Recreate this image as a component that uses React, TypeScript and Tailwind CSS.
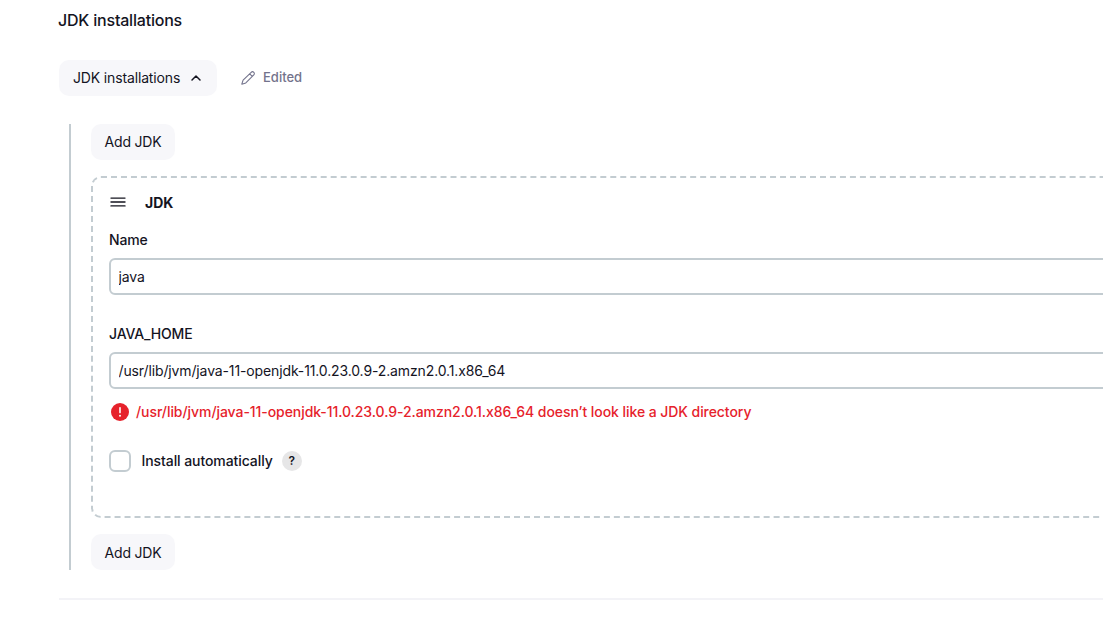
import { useState } from "react";

function AddButton({ className = "" }: { className?: string }) {
  return (
    <button className={`block h-9 w-[84px] rounded-[10px] bg-[#f7f7fa] text-[14px] leading-5 tracking-[-0.2px] ${className}`}>
      Add JDK
    </button>
  );
}

function Field({ label, value }: { label: string; value: string }) {
  const [text, setText] = useState(value);
  return (
    <label className="block">
      <span className="block h-5 text-[14px] leading-5 font-medium tracking-[-0.15px]">{label}</span>
      <input
        className="mt-2 block h-[37px] w-full rounded-[6px] border-2 border-[#c3ccd1] bg-white px-[7.5px] text-[14px] tracking-[-0.128px] outline-none"
        value={text}
        onChange={(e) => setText(e.target.value)}
      />
    </label>
  );
}

export default function App() {
  return (
    <main className="h-[617px] w-full overflow-hidden bg-white pl-[59px] font-['Inter',sans-serif] text-[#14141f]">
      <h2 className="-ml-px pt-2 text-[16px] leading-6 font-medium tracking-[-0.2px]">JDK installations</h2>
      <div className="mt-7 flex items-center">
        <button className="flex h-9 w-[158px] items-center rounded-[10px] bg-[#f7f7fa] pl-[14px] text-[14px] tracking-[-0.15px]">
          <span className="pb-px">JDK installations</span>
          <svg className="ml-[10px] h-3 w-3" viewBox="0 0 12 12" fill="none" stroke="currentColor" strokeWidth="1.5" strokeLinecap="round" strokeLinejoin="round">
            <path d="M2 8 6 4l4 4" />
          </svg>
        </button>
        <div className="ml-6 flex items-center text-[13px] font-medium text-[#73738c]">
          <svg className="mr-2 h-[14px] w-[14px]" viewBox="0 0 14 14" fill="none" stroke="currentColor" strokeWidth="1.1" strokeLinecap="round" strokeLinejoin="round">
            <path d="M10.2 1.3a1.8 1.8 0 0 1 2.6 2.6L4.8 11.9.8 13.2l1.3-4ZM8.7 2.8l2.6 2.6" />
          </svg>
          Edited
        </div>
      </div>
      <section className="mt-7 ml-[10px] h-[446px] w-[1100px] border-l-2 border-[#c3ccd1] pl-5">
        <AddButton />
        <div className="my-4 h-[342px] rounded-[10px] border-2 border-dashed border-[#c3ccd1] pt-[15px] pl-4">
          <div className="flex h-5 items-center">
            <svg className="ml-[1px] h-4 w-4" viewBox="0 0 16 16" fill="none" stroke="currentColor" strokeWidth="1.4" strokeLinecap="round">
              <path d="M1 3.1h14M1 7h14M1 10.9h14" />
            </svg>
            <span className="ml-[19px] pb-[2px] text-[14px] font-bold">JDK</span>
          </div>
          <div className="mt-[17px]">
            <Field label="Name" value="java" />
          </div>
          <div className="mt-[29px]">
            <Field label="JAVA_HOME" value="/usr/lib/jvm/java-11-openjdk-11.0.23.0.9-2.amzn2.0.1.x86_64" />
          </div>
          <div className="mt-[13px] flex h-5 items-center text-[14px] font-medium tracking-[-0.065px] text-[#e6222b]">
            <svg className="mr-[7px] ml-[2px] h-[18px] w-[18px]" viewBox="0 0 18 18">
              <circle cx="9" cy="9" r="9" fill="#e6222b" />
              <path d="M9 4.8v4.8" stroke="#fff" strokeWidth="1.6" strokeLinecap="round" />
              <circle cx="9" cy="12.7" r="1" fill="#fff" />
            </svg>
            <span className="pb-[2px]">
              /usr/lib/jvm/java-11-openjdk-11.0.23.0.9-2.amzn2.0.1.x86_64 doesn’t look like a JDK directory
            </span>
          </div>
          <div className="mt-7 flex h-[22px] items-center text-[14px] font-medium tracking-[-0.08px]">
            <span className="h-[22px] w-[22px] rounded-[6px] border-2 border-[#c3ccd1]" />
            <span className="ml-[10.5px] pb-[2px]">Install automatically</span>
            <button className="ml-[9px] h-5 w-5 rounded-full bg-[#e6e6e7] text-[12px] leading-5 font-semibold">?</button>
          </div>
        </div>
        <AddButton className="pt-px" />
      </section>
      <hr className="mt-7 border-t-2 border-[#f3f3f7]" />
    </main>
  );
}
